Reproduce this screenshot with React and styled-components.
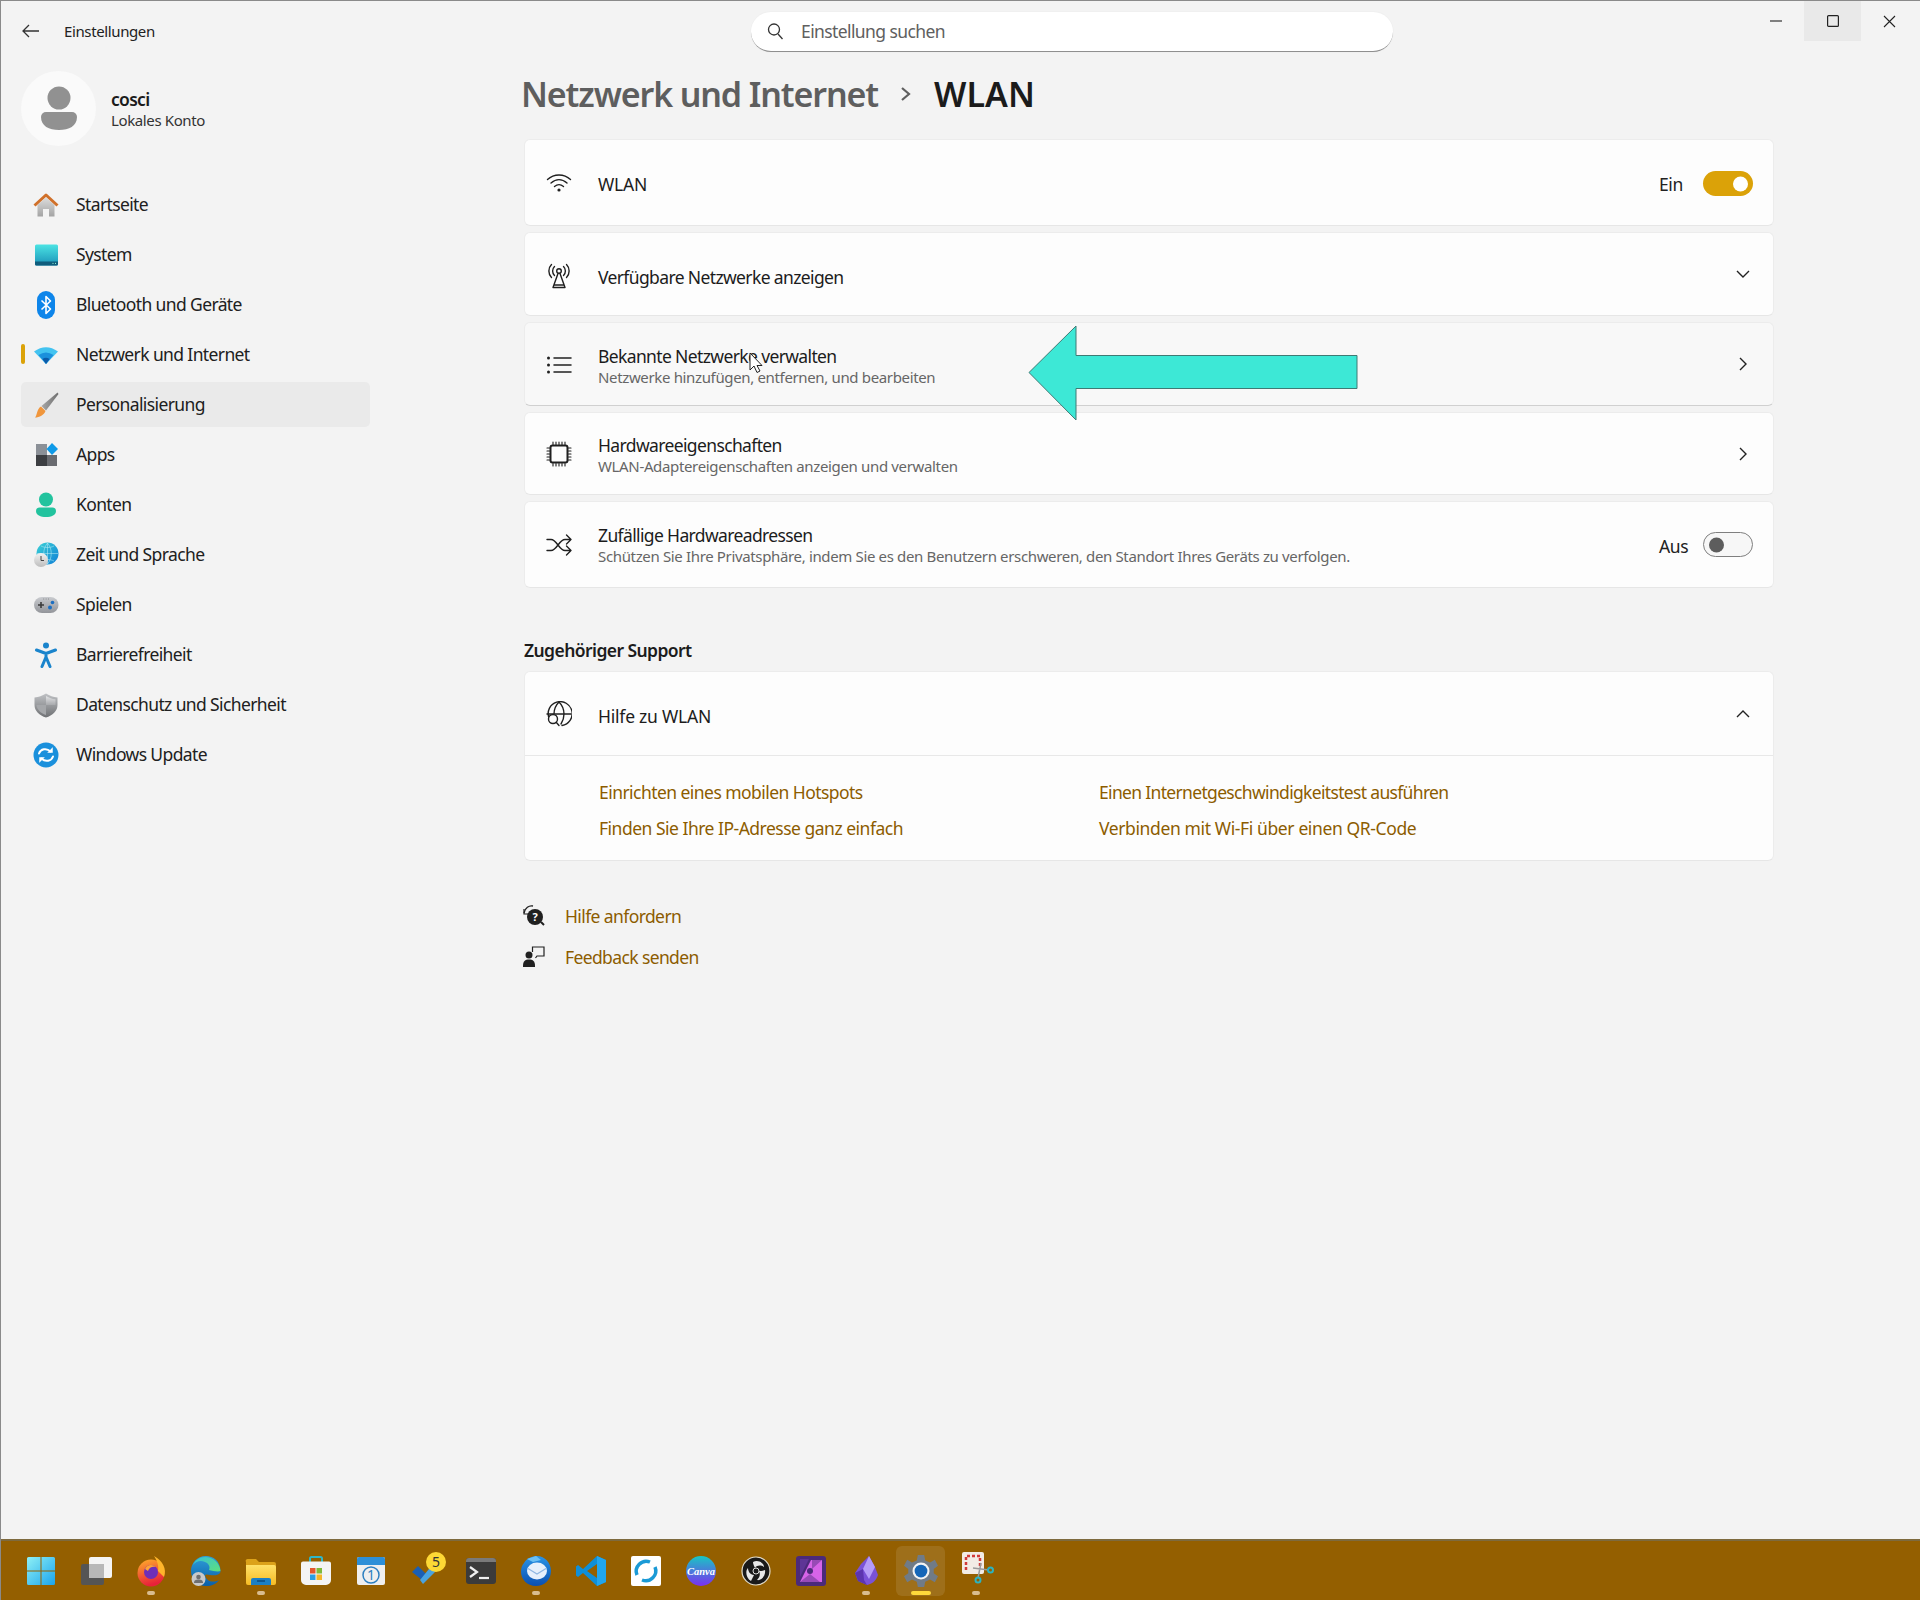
import React from 'react';
import styled, { createGlobalStyle } from 'styled-components';

const Global = createGlobalStyle`
  html, body { margin: 0; padding: 0; background: #f3f3f3; }
  * { box-sizing: border-box; }
  body { font-family: "Noto Sans", "Open Sans", "Liberation Sans", sans-serif; color: #1b1b1b; }
`;

const Page = styled.div`
  width: 1920px; height: 1600px; display: flex; flex-direction: column;
  background: #f3f3f3; border-top: 1px solid #8a8a8a; border-left: 1px solid #8a8a8a; overflow: hidden;
`;
const Win = styled.div`flex: 1; display: flex; flex-direction: column; position: relative; min-height: 0;`;
const Header = styled.header`
  height: 59px; display: grid; grid-template-columns: 750px 642px 1fr; align-items: start;
`;
const HeadLeft = styled.div`display: flex; align-items: center; height: 60px; padding-left: 20px; gap: 24px;`;
const AppName = styled.span`font-size: 15px; color: #222; letter-spacing: -0.38px;`;
const Search = styled.div`
  margin-top: 11px; height: 40px; background: #fff; border-radius: 20px; border-bottom: 1.5px solid #8f8f8f;
  box-shadow: 0 0 0 1px #f0f0f0; display: flex; align-items: center; padding: 0 0 1px 15px; gap: 17px;
  font-size: 17.5px; color: #606060; letter-spacing: -0.6px;
`;
const Controls = styled.div`display: flex; justify-content: flex-end; padding-right: 2px;`;
const Ctl = styled.div`
  width: 57px; height: 40px; display: flex; align-items: center; justify-content: center;
  background: ${p => (p.$hover ? '#e9e9e9' : 'transparent')};
`;
const Body = styled.div`flex: 1; display: flex; min-height: 0;`;
const Side = styled.aside`width: 520px; padding: 11px 0 0 20px;`;
const Profile = styled.div`display: flex; align-items: center; gap: 15px;`;
const Avatar = styled.div`
  width: 75px; height: 75px; border-radius: 50%; background: #fafafa;
  display: flex; align-items: center; justify-content: center;
`;
const Who = styled.div`display: flex; flex-direction: column; margin-top: 1px;`;
const Name = styled.span`font-size: 17.5px; font-weight: 600; line-height: 22px; letter-spacing: -0.7px;`;
const Acct = styled.span`font-size: 15px; line-height: 20px; color: #333; letter-spacing: -0.38px;`;
const Nav = styled.nav`margin-top: 36px; width: 349px; display: flex; flex-direction: column; gap: 5px;`;
const Item = styled.div`
  position: relative; height: 45px; border-radius: 5px; display: flex; align-items: center;
  padding-left: 12px; gap: 17px; font-size: 17.5px; color: #202020; letter-spacing: -0.62px;
  background: ${p => (p.$hover ? '#eaeaea' : 'transparent')};
`;
const NavLabel = styled.span`margin-bottom: 1px;`;
const Marker = styled.span`
  position: absolute; left: 0; top: 12px; width: 4px; height: 20px; border-radius: 2px; background: #dba208;
`;
const Main = styled.main`flex: 1; position: relative; padding-left: 1px;`;
const Crumb = styled.h1`
  margin: 10px 0 0 -1px; height: 48px; display: flex; align-items: center; font-size: 34px; font-weight: 600; line-height: 48px;
`;
const CrumbDim = styled.span`color: #5e5e5e; letter-spacing: -1.12px;`;
const CrumbNow = styled.span`letter-spacing: 0.1px;`;
const CrumbSep = styled.span`width: 56px; display: flex; justify-content: center;`;
const Stack = styled.div`margin: 21px 0 0 2px; width: 1250px; display: flex; flex-direction: column; gap: 6px;`;
const Card = styled.div`
  background: ${p => (p.$hover ? '#f8f8f8' : '#fdfdfd')}; border: 1px solid #ececec;
  border-bottom-color: ${p => (p.$hover ? '#d0d0d0' : '#e6e6e6')}; border-radius: 6px;
`;
const Row = styled.div`
  height: ${p => p.$h}px; display: flex; align-items: center; padding: 0 20px 0 21px;
`;
const RowIcon = styled.div`
  width: 26px; height: 26px; flex: none; display: flex; align-items: center; justify-content: center;
  margin-right: 26px; margin-top: ${p => p.$mt || 0}px;
`;
const RowText = styled.div`flex: 1; display: flex; flex-direction: column; margin-top: ${p => p.$mt || 0}px;`;
const Title = styled.span`font-size: 17.5px; line-height: 22px; color: #1c1c1c; letter-spacing: ${p => (p.$wide ? '-0.22px' : '-0.63px')};`;
const Sub = styled.span`font-size: 15px; line-height: 20px; color: #666; letter-spacing: -0.35px;`;
const State = styled.span`
  font-size: 17.5px; color: #222; width: 44px; flex: none; letter-spacing: -0.4px; margin-top: ${p => p.$mt || 0}px;
`;
const Toggle = styled.div`
  width: 50px; height: 25px; border-radius: 13px; position: relative; margin-top: ${p => p.$mt || 0}px;
  background: ${p => (p.$on ? '#dba208' : '#f7f7f7')}; border: ${p => (p.$on ? 'none' : '1.5px solid #7f7f7f')};
`;
const Knob = styled.span`
  position: absolute; top: 50%; transform: translateY(-50%); width: 15px; height: 15px; border-radius: 50%;
  right: ${p => (p.$on ? '5px' : 'auto')}; left: ${p => (p.$on ? 'auto' : '5px')};
  background: ${p => (p.$on ? '#fff' : '#5d5d5d')};
`;
const Chev = styled.div`width: 22px; display: flex; justify-content: center; margin-right: -1px; margin-top: ${p => p.$mt || 0}px;`;
const SectionHead = styled.h2`margin: 44px 0 3px 0; font-size: 17.5px; font-weight: 600; line-height: 24px; color: #1c1c1c; letter-spacing: -0.57px;`;
const Divider = styled.div`height: 1px; background: #e8e8e8;`;
const LinkGrid = styled.div`
  display: grid; grid-template-columns: 500px 1fr; row-gap: 12px; padding: 24px 0 20px 74px;
`;
const A = styled.a`font-size: 17.5px; line-height: 24px; color: #8c5c00; letter-spacing: ${p => p.$ls}px;`;
const Foot = styled.div`margin-top: 37px; margin-left: -1px; display: flex; flex-direction: column; gap: 17px;`;
const FootRow = styled.div`display: flex; align-items: center; gap: 20px; height: 24px;`;
const Overlay = styled.svg`position: absolute; pointer-events: none; left: ${p => p.$x}px; top: ${p => p.$y}px;`;
const Bar = styled.footer`
  height: 61px; flex: none; background: #945f00; border-top: 2px solid #7e6a3e;
  display: flex; align-items: center; padding-left: 13px; margin-left: -1px;
`;
const Tile = styled.div`
  position: relative; width: 55px; height: 50px; display: flex; align-items: center; justify-content: center; margin-top: 1px;
  &::before {
    content: ''; display: ${p => (p.$active ? 'block' : 'none')}; position: absolute; left: 3px; right: 3px; top: 0; bottom: 0;
    border-radius: 6px; background: rgba(255,255,255,0.1);
  }
  &::after {
    content: ''; display: ${p => (p.$state ? 'block' : 'none')}; position: absolute; bottom: 1px; left: 50%; transform: translateX(-50%);
    width: ${p => (p.$state === 'active' ? '20px' : '8px')}; height: 4px; border-radius: 2px;
    background: ${p => (p.$state === 'active' ? '#ffd83a' : '#d9bd90')};
  }
`;
const TileIcon = styled.svg`position: relative; display: block;`;

const S = ({ size = 26, children, ...r }) => <svg width={size} height={size} viewBox="0 0 26 26" fill="none" {...r}>{children}</svg>;
const Line = ({ children, size = 26 }) => (
  <svg width={size} height={size} viewBox="0 0 26 26" fill="none" stroke="#202020" strokeWidth="1.4" strokeLinecap="round" strokeLinejoin="round">{children}</svg>
);
const G = ({ id, a, b, x2 = 0, y2 = 1 }) => (
  <linearGradient id={id} x1="0" y1="0" x2={x2} y2={y2}><stop offset="0" stopColor={a} /><stop offset="1" stopColor={b} /></linearGradient>
);

const Home = () => <S><defs><G id="h1" a="#dcdcdc" b="#a3a3a3" /></defs>
  <path d="M4.5 13 13 5.5 21.5 13V24.5H16V17H10V24.5H4.5Z" fill="url(#h1)" /><path d="M1.5 13.5 13 3l11.5 10.5" stroke="#d0702a" strokeWidth="3" strokeLinejoin="round" /></S>;
const Sys = () => <S><defs><G id="s1" a="#4be3e3" b="#1a92b8" /></defs>
  <rect x="2" y="2.5" width="23" height="21" rx="1.5" fill="url(#s1)" /><path d="M2 19.5H25V22a1.5 1.5 0 0 1-1.5 1.5h-20A1.5 1.5 0 0 1 2 22Z" fill="#0f5c7c" /><path d="M19.5 21.4h1M22 21.4h1" stroke="#9fd" /></S>;
const Bt = () => <S width={26} height={28} viewBox="1 0 26 28"><rect x="5" y="0" width="18" height="28" rx="9" fill="#0d85ea" /><path d="M9.5 9.5 18.5 18 14 22.5V5.5L18.5 10 9.5 18.5" stroke="#fff" strokeWidth="1.6" strokeLinejoin="round" /></S>;
const Wifi = () => <S><path d="M1 9.5Q13 1 25 9.5L13 22Z" fill="#43c3f0" /><path d="M5.5 13Q13 8 20.5 13L13 22Z" fill="#1b90dc" /><path d="M9.5 17Q13 14.5 16.5 17L13 22Z" fill="#0c5aa8" /></S>;
const Brush = () => <S><defs><G id="b1" a="#a8a8a8" b="#6f6f6f" x2="1" y2="0" /></defs>
  <path d="M24.5 0.5 25.5 2 13 18.5 8.5 14Z" fill="url(#b1)" /><path d="M8 14.5 12.5 19C11 23 6.5 25.5 2 25.5 4.5 23 3.5 17 8 14.5Z" fill="#f0963c" /></S>;
const Apps = () => <S><rect x="3" y="2" width="11" height="11" fill="#8b9097" /><rect x="3" y="13" width="11" height="11" fill="#3c3e42" /><rect x="14" y="13" width="10" height="11" fill="#696b70" /><path d="M19 1 25 7 19 13 13.5 7Z" fill="#0f9ae8" /></S>;
const Acc = () => <S><circle cx="13" cy="7.5" r="7" fill="#22c39e" /><path d="M3 19a3.5 3.5 0 0 1 3.5-3.5h13A3.5 3.5 0 0 1 23 19c0 4-4.5 6-10 6S3 23 3 19Z" fill="#22c39e" /></S>;
const Time = () => <S><defs><G id="t1" a="#3bd2d6" b="#0f7fd6" x2="1" y2="1" /><G id="t2" a="#f2f2f2" b="#bdbdbd" /></defs>
  <circle cx="14.5" cy="11.5" r="11" fill="url(#t1)" /><path d="M14.5 1v21M4 11.5h21M8 4c4 2 9 2 13 0M8 19c4-2 9-2 13 0M14.5 1c-5 6-5 15 0 21M14.5 1c5 6 5 15 0 21" stroke="#bfeef4" strokeWidth=".5" />
  <circle cx="8" cy="18" r="7" fill="url(#t2)" /><path d="M8 14v4.5h3" stroke="#444" strokeWidth="1" /></S>;
const Game = () => <S><defs><G id="g1" a="#c9cbcf" b="#93959a" /></defs><rect x="1" y="5" width="24.5" height="16" rx="8" fill="url(#g1)" /><path d="M5 13h6M8 10v6" stroke="#3c3c3c" strokeWidth="1.6" /><circle cx="17" cy="15.5" r="2" fill="#1d6fc1" /><circle cx="19.5" cy="10.5" r="1.8" fill="#1d6fc1" /><path d="M10.5 7h.6M12.8 7h.6M15 7h.6" stroke="#666" /></S>;
const Access = () => <S><circle cx="13" cy="3.5" r="3" fill="#1a84cc" /><path d="M3.5 8 13 11.5 22.5 8M13 11.5V15.5M13 15 9 24.5M13 15 17 24.5" stroke="#1a84cc" strokeWidth="3" strokeLinecap="round" strokeLinejoin="round" /></S>;
const Shield = () => <S><defs><G id="sh" a="#c0c2c5" b="#6f7174" /><G id="sh2" a="#e2e3e5" b="#a8aaad" /></defs>
  <path d="M13 1.5C17 4 20 5 24.5 5.5V13c0 6-5 10.5-11.5 12.5C6.500 23.500 1.500 19 1.500 13V5.500C6 5 9 4 13 1.500Z" fill="url(#sh)" /><path d="M13 4C16.500 6 19 7 22.500 7.300V13H13Z" fill="url(#sh2)" /><path d="M13 13H3.500C3.800 17.500 7.500 21 13 23Z" fill="#a5a7aa" /></S>;
const Update = () => <S><circle cx="13" cy="13" r="12.500" fill="#1a90dc" /><path d="M6 11.500C7.500 7 13.500 5.500 17.500 9.500M20 14.500C18.500 19 12.500 20.500 8.500 16.500" stroke="#fff" strokeWidth="2" strokeLinecap="round" /><path d="M19.500 5.500V10.500H14.500M6.500 20.500V15.500H11.500" fill="#fff" stroke="#fff" strokeWidth="0.5" /></S>;

const IWifi = () => <Line><path d="M1.500 9.500C8 3.500 18 3.500 24.500 9.500M5 13C10 8.500 16 8.500 21 13M8.500 16.500C11.500 14 14.500 14 17.500 16.500" /><circle cx="13" cy="20" r="1.600" fill="#202020" stroke="none" /></Line>;
const IAnt = () => <Line><circle cx="13" cy="8" r="2.300" /><path d="M8.500 3.500C6 6 6 10 8.500 12.500M17.500 3.500C20 6 20 10 17.500 12.500M5.500 1.500C2 5 2 11 5.500 14.500M20.500 1.500C24 5 24 11 20.500 14.500" /><path d="M12 10.500 7 24.500M14 10.500 19 24.500M8.500 22H17.500M7 24.500H19" /></Line>;
const IList = () => <Line><path d="M8 6H25M8 13H25M8 20H25" strokeWidth="1.500" /><circle cx="2.500" cy="6" r="1.500" fill="#202020" stroke="none" /><circle cx="2.500" cy="13" r="1.500" fill="#202020" stroke="none" /><circle cx="2.500" cy="20" r="1.500" fill="#202020" stroke="none" /></Line>;
const IChip = () => <Line><rect x="4.500" y="4.500" width="17" height="17" rx="2" strokeWidth="2" /><path d="M7 1v2.500M10 1v2.500M13 1v2.500M16 1v2.500M19 1v2.500M7 22.500V25M10 22.500V25M13 22.500V25M16 22.500V25M19 22.500V25M1 7h2.500M1 10h2.500M1 13h2.500M1 16h2.500M1 19h2.500M22.500 7H25M22.500 10H25M22.500 13H25M22.500 16H25M22.500 19H25" strokeWidth="1.100" /></Line>;
const IShuf = () => <Line><path d="M1 7.500H5C11 7.500 13 18.500 19 18.500H25M1 18.500H5C11 18.500 13 7.500 19 7.500H25M20.500 3 25 7.500 20.500 12M20.500 14 25 18.500 20.500 23" /></Line>;
const IGlobe = () => <Line><path d="M3 17A12 12 0 1 1 16 24.500" /><path d="M1 13H25M13 1C9 5 8 9 8 13M13 1C17 5 18 9 18 13C18 17 17 20 15 23" /><circle cx="7" cy="18" r="4.500" fill="#fdfdfd" /><path d="M10.200 21.200 13 24.500" /></Line>;
const IHelp = () => <svg width="22" height="24" viewBox="0 0 22 24"><path d="M1 9C2 4 6 1 10 2" stroke="#202020" strokeWidth="1.300" fill="none" /><path d="M1 5V10H5" stroke="#202020" strokeWidth="1.200" fill="none" /><circle cx="12" cy="13" r="8" fill="#202020" /><path d="M18 18 21 21" stroke="#202020" strokeWidth="2" /><text x="12" y="17" fontSize="11" fontWeight="700" fill="#fff" textAnchor="middle" fontFamily="Noto Sans">?</text></svg>;
const IFeed = () => <svg width="22" height="24" viewBox="0 0 22 24"><circle cx="6" cy="10" r="3.500" fill="#202020" /><path d="M0 21C0 16 2 14.500 6 14.500S12 16 12 21V22H0Z" fill="#202020" /><path d="M9.500 7V2H21V11H14L12.500 13" stroke="#202020" strokeWidth="1.200" fill="none" /></svg>;
const ChevR = () => <svg width="12" height="18" viewBox="0 0 12 18" fill="none" stroke="#222" strokeWidth="1.400"><path d="M3 3 9 9 3 15" /></svg>;
const ChevD = () => <svg width="16" height="12" viewBox="0 0 16 12" fill="none" stroke="#222" strokeWidth="1.400"><path d="M2 3 8 9 14 3" /></svg>;
const ChevU = () => <svg width="16" height="12" viewBox="0 0 16 12" fill="none" stroke="#222" strokeWidth="1.400"><path d="M2 9 8 3 14 9" /></svg>;

const T = ({ children, w = 32 }) => <TileIcon width={w} height={w} viewBox="0 0 32 32">{children}</TileIcon>;

const TWin = () => <T><defs><G id="w1" a="#8ff0f4" b="#1aa4ee" x2="1" y2="1" /></defs><path d="M2 3.500A1.500 1.500 0 0 1 3.500 2H15.500V15.500H2ZM16.500 2H28.500A1.500 1.500 0 0 1 30 3.500V15.500H16.500ZM2 16.500H15.500V30H3.500A1.500 1.500 0 0 1 2 28.500ZM16.500 16.500H30V28.500A1.500 1.500 0 0 1 28.500 30H16.500Z" fill="url(#w1)" /></T>;
const TView = () => <T><rect x="9" y="2" width="23" height="21" rx="2" fill="#f4f4f4" /><rect x="1" y="9" width="23" height="21" rx="2" fill="#555" /><rect x="9" y="9" width="15" height="14" fill="#b8b8b8" /></T>;
const TFox = () => <T><defs><G id="f1" a="#ffb02a" b="#e8203a" x2="0.300" /></defs><circle cx="16" cy="18" r="13.500" fill="url(#f1)" /><path d="M19 1C28 6 32 14 29 22L23 16C24 10 22 6 19 1Z" fill="#ffb52b" /><circle cx="16" cy="17" r="7" fill="#6e2fb8" /><path d="M10 14C12 9 18 9 21 12 18 11 14 12 13 16Z" fill="#ffa436" /></T>;
const TEdge = () => <T><defs><G id="e1" a="#2f9ed8" b="#0a5fa8" /><G id="e2" a="#35c1d8" b="#5fe07a" x2="1" y2="1" /></defs><path d="M30.500 16C30.500 6 23 1 16 1 7 1 1 8 1 16C1 25 8 31 16 31C22 31 26 29 29 25C24 28 16 27 15 20C17 18 22 22 28 19.500C30 18.500 30.500 17.500 30.500 16Z" fill="url(#e1)" /><path d="M30.500 16C30 8 23 2 15 2 10 2 5 5 3 10 6 6 11 5 15 7 20 9 20 13 19 15 23 16 28 17 30.500 16Z" fill="url(#e2)" /><circle cx="8.500" cy="24" r="7" fill="#c9c9c9" /><circle cx="8.500" cy="22" r="2.300" fill="#6f6f6f" /><path d="M4 28C4 25 6 24.500 8.500 24.500S13 25 13 28Z" fill="#6f6f6f" /></T>;
const TDir = () => <T><defs><G id="d1" a="#ffe169" b="#f6bb23" /></defs><path d="M1 7A2 2 0 0 1 3 4H11L14 7H29A2 2 0 0 1 31 9V13H1Z" fill="#dca21a" /><path d="M1 10H29A2 2 0 0 1 31 12V28A2 2 0 0 1 29 30H3A2 2 0 0 1 1 28Z" fill="url(#d1)" /><path d="M6 30V25A2 2 0 0 1 8 23H24A2 2 0 0 1 26 25V30Z" fill="#1b7fc4" /><path d="M12 26H20" stroke="#0b4a80" strokeWidth="1.500" /></T>;
const TStore = () => <T><path d="M10 8V3.500A1.500 1.500 0 0 1 11.500 2H20.500A1.500 1.500 0 0 1 22 3.500V8" stroke="#2fb6c7" strokeWidth="2" fill="none" /><path d="M1 8.500A2 2 0 0 1 3 6.500H29A2 2 0 0 1 31 8.500V25A5 5 0 0 1 26 30H6A5 5 0 0 1 1 25Z" fill="#f4f4f4" /><rect x="10" y="13" width="5.500" height="5.500" fill="#e4572e" /><rect x="16.500" y="13" width="5.500" height="5.500" fill="#7fba3a" /><rect x="10" y="19.500" width="5.500" height="5.500" fill="#2a9de4" /><rect x="16.500" y="19.500" width="5.500" height="5.500" fill="#f4b528" /></T>;
const TCal = () => <T><rect x="2" y="2" width="28" height="28" rx="2" fill="#efefef" /><path d="M2 4A2 2 0 0 1 4 2H28A2 2 0 0 1 30 4V10H2Z" fill="#2d8fd8" /><circle cx="16" cy="20" r="8" stroke="#2d7fc0" strokeWidth="1.500" fill="none" /><text x="16" y="25" fontSize="14" fill="#2d7fc0" textAnchor="middle" fontFamily="Noto Sans">1</text></T>;
const TCheck = () => <TileIcon width="38" height="36" viewBox="0 0 38 36" style={{ marginLeft: 8, marginTop: -2 }}><path d="M1 20 7 14 15 22 11 28Z" fill="#1a5fb4" /><path d="M9 28 12 32 27 17 22 12Z" fill="#4aa3df" /><circle cx="25" cy="10" r="10" fill="#fdd835" /><text x="25" y="15" fontSize="14" fill="#333" textAnchor="middle" fontFamily="Noto Sans">5</text></TileIcon>;
const TTerm = () => <T><rect x="1" y="3" width="30" height="26" rx="3" fill="#3b3b3b" /><path d="M1 6A3 3 0 0 1 4 3H28A3 3 0 0 1 31 6V7H1Z" fill="#7a7a7a" /><path d="M5 12 12 17 5 22" stroke="#f0f0f0" strokeWidth="2.200" fill="none" /><path d="M14 23H24" stroke="#f0f0f0" strokeWidth="2.200" /></T>;
const TBird = () => <T><defs><G id="tb" a="#2a94e6" b="#0a4fb0" /></defs><path d="M4 8C7 3 12 1 17 1 25 1 31 8 31 16 31 25 24 31 16 31 7 31 1 24 1 17 1 13 2 10 4 8Z" fill="url(#tb)" /><path d="M7 4 16 1 21 5 13 7Z" fill="#6cc0f4" /><ellipse cx="17" cy="16" rx="10" ry="8.500" fill="#e6f0fc" /><path d="M8 13.500 17 19 26 13.500" stroke="#8fb6e2" strokeWidth="1.200" fill="none" /></T>;
const TCode = () => <T><path d="M22 1 31 5V27L22 31 8 18 3 22 1 20.500V11.500L3 10 8 14Z" fill="#0f8fd8" /><path d="M22 1 31 5V27L22 31Z" fill="#22a6ee" /><path d="M22 9 12 16 22 23Z" fill="#945f00" /></T>;
const TRing = () => <T><rect x="1" y="1" width="30" height="30" rx="2" fill="#fff" /><path d="M7 20A10 10 0 0 1 20 7" stroke="#1a9ad6" strokeWidth="3.500" fill="none" /><path d="M25 12A10 10 0 0 1 12 25" stroke="#1a9ad6" strokeWidth="3.500" fill="none" /></T>;
const TCanva = () => <T><defs><G id="ca" a="#18c7c4" b="#7b2ff0" /></defs><circle cx="16" cy="16" r="15" fill="url(#ca)" /><text x="16" y="20" fontSize="10.500" fontStyle="italic" fontWeight="700" fill="#fff" textAnchor="middle" fontFamily="Liberation Serif">Canva</text></T>;
const TObs = () => <T><circle cx="16" cy="16" r="14" fill="#1a1a1a" stroke="#e4ddcb" strokeWidth="1.200" /><circle cx="16" cy="16" r="3" fill="#1a1a1a" stroke="#ddd" /><path d="M13 7C18 4 24 8 24 12 21 10 17 10 15 13 14 11 13 9 13 7ZM25 15C26 21 21 26 17 25 19 23 21 20 19 16 21 16 23 16 25 15ZM11 26C6 23 5 16 8 13 8 16 10 20 14 20 13 22 12 24 11 26Z" fill="#e8e8e8" /></T>;
const TAff = () => <T><rect x="1" y="1" width="30" height="30" rx="3" fill="#4b2a7a" /><path d="M5 27 16 5H27V27Z" fill="#d664e8" /><path d="M17 5 27 5 17 14ZM5 27 15 19 25 27Z" fill="#4b2a7a" opacity=".45" /><circle cx="15" cy="16" r="3" fill="#4b2a7a" /><path d="M14 4 5 22V4Z" fill="#5e3596" /></T>;
const TObsid = () => <T><path d="M19 1 25 12 28 20C26 26 22 29 17 30L8 26 5 18 11 9Z" fill="#7a52d8" /><path d="M19 1 13 14 19 24 25 12Z" fill="#b59cf8" /><path d="M5 18 13 14 14 25 17 30 8 26Z" fill="#5c35b0" /></T>;
const TGear = () => <T w={34}><path d="M13 1H19L20 6 24.500 8 29 5.500 32 11 28 14V18L32 21 29 26.500 24.500 24 20 26 19 31H13L12 26 7.500 24 3 26.500 0 21 4 18V14L0 11 3 5.500 7.500 8 12 6Z" fill="#707b87" /><circle cx="16" cy="16" r="8" fill="#f2f2f2" /><circle cx="16" cy="16" r="6" fill="#1566b8" /></T>;
const TSnip = () => <TileIcon width="32" height="36" viewBox="0 0 32 36" style={{ marginLeft: 4, marginTop: -2 }}><rect x="0" y="0" width="22" height="22" rx="2" fill="#f2ece6" /><path d="M4 18V4H18V16" stroke="#d13a3a" strokeWidth="2.500" strokeDasharray="3 2" fill="none" /><path d="M19 11 16 26M11 16 27 18" stroke="#9a9a9a" strokeWidth="1.500" /><circle cx="16" cy="28" r="2.500" stroke="#2bb3c0" strokeWidth="2" fill="none" /><circle cx="28.500" cy="18" r="2.500" stroke="#2bb3c0" strokeWidth="2" fill="none" /></TileIcon>;

const nav = [
  ['Startseite', Home], ['System', Sys], ['Bluetooth und Geräte', Bt], ['Netzwerk und Internet', Wifi, 'mark'],
  ['Personalisierung', Brush, 'hover'], ['Apps', Apps], ['Konten', Acc], ['Zeit und Sprache', Time], ['Spielen', Game],
  ['Barrierefreiheit', Access], ['Datenschutz und Sicherheit', Shield], ['Windows Update', Update],
];
const bar = [
  [TWin], [TView], [TFox, 'open'], [TEdge], [TDir, 'open'], [TStore], [TCal], [TCheck], [TTerm],
  [TBird, 'open'], [TCode], [TRing], [TCanva], [TObs], [TAff], [TObsid, 'open'], [TGear, 'active'], [TSnip, 'open'],
];

export default function App() {
  return (
    <Page>
      <Global />
      <Win>
        <Header>
          <HeadLeft>
            <svg width="19" height="16" viewBox="0 0 19 16" fill="none" stroke="#333" strokeWidth="1.300"><path d="M18 8H2M8 2 2 8 8 14" /></svg>
            <AppName>Einstellungen</AppName>
          </HeadLeft>
          <Search>
            <svg width="18" height="18" viewBox="0 0 18 18" fill="none" stroke="#333" strokeWidth="1.300"><circle cx="8" cy="7.500" r="5.500" /><path d="M12 12 16.500 17" /></svg>
            Einstellung suchen
          </Search>
          <Controls>
            <Ctl><svg width="12" height="2"><path d="M0 1H12" stroke="#333" strokeWidth="1.200" /></svg></Ctl>
            <Ctl $hover><svg width="12" height="12"><rect x=".6" y=".6" width="10.800" height="10.800" rx="1" fill="none" stroke="#222" strokeWidth="1.200" /></svg></Ctl>
            <Ctl><svg width="13" height="13"><path d="M1 1 12 12M12 1 1 12" stroke="#222" strokeWidth="1.100" /></svg></Ctl>
          </Controls>
        </Header>
        <Body>
          <Side>
            <Profile>
              <Avatar>
                <svg width="36" height="45" viewBox="0 0 36 45"><circle cx="18" cy="12" r="11.500" fill="#919191" /><path d="M0 31a5 5 0 0 1 5-5h26a5 5 0 0 1 5 5c0 9-8 13-18 13S0 40 0 31Z" fill="#919191" /></svg>
              </Avatar>
              <Who><Name>cosci</Name><Acct>Lokales Konto</Acct></Who>
            </Profile>
            <Nav>
              {nav.map(([label, Icon, f]) => (
                <Item key={label} $hover={f === 'hover'}>
                  {f === 'mark' && <Marker />}
                  <Icon />
                  <NavLabel>{label}</NavLabel>
                </Item>
              ))}
            </Nav>
          </Side>
          <Main>
            <Crumb>
              <CrumbDim>Netzwerk und Internet</CrumbDim>
              <CrumbSep><svg width="14" height="20" viewBox="0 0 14 20" fill="none" stroke="#5e5e5e" strokeWidth="2.200"><path d="M3 4 10 10 3 16" /></svg></CrumbSep>
              <CrumbNow>WLAN</CrumbNow>
            </Crumb>
            <Stack>
              <Card>
                <Row $h={85}><RowIcon><IWifi /></RowIcon><RowText $mt={2}><Title $wide>WLAN</Title></RowText><State $mt={3}>Ein</State><Toggle $on $mt={2}><Knob $on /></Toggle></Row>
              </Card>
              <Card>
                <Row $h={82}><RowIcon $mt={3}><IAnt /></RowIcon><RowText $mt={5}><Title>Verfügbare Netzwerke anzeigen</Title></RowText><Chev><ChevD /></Chev></Row>
              </Card>
              <Card $hover>
                <Row $h={82}><RowIcon $mt={2}><IList /></RowIcon><RowText $mt={3}><Title>Bekannte Netzwerke verwalten</Title><Sub>Netzwerke hinzufügen, entfernen, und bearbeiten</Sub></RowText><Chev><ChevR /></Chev></Row>
              </Card>
              <Card>
                <Row $h={81}><RowIcon $mt={1}><IChip /></RowIcon><RowText $mt={3}><Title>Hardwareeigenschaften</Title><Sub>WLAN-Adaptereigenschaften anzeigen und verwalten</Sub></RowText><Chev><ChevR /></Chev></Row>
              </Card>
              <Card>
                <Row $h={85}><RowIcon><IShuf /></RowIcon><RowText $mt={1}><Title>Zufällige Hardwareadressen</Title><Sub>Schützen Sie Ihre Privatsphäre, indem Sie es den Benutzern erschweren, den Standort Ihres Geräts zu verfolgen.</Sub></RowText><State $mt={3}>Aus</State><Toggle><Knob /></Toggle></Row>
              </Card>
              <SectionHead>Zugehöriger Support</SectionHead>
              <Card>
                <Row $h={83}><RowIcon $mt={1}><IGlobe /></RowIcon><RowText $mt={5}><Title $wide>Hilfe zu WLAN</Title></RowText><Chev $mt={1}><ChevU /></Chev></Row>
                <Divider />
                <LinkGrid>
                  <A $ls={-0.55}>Einrichten eines mobilen Hotspots</A><A $ls={-0.67}>Einen Internetgeschwindigkeitstest ausführen</A>
                  <A $ls={-0.5}>Finden Sie Ihre IP-Adresse ganz einfach</A><A $ls={-0.38}>Verbinden mit Wi-Fi über einen QR-Code</A>
                </LinkGrid>
              </Card>
              <Foot>
                <FootRow><IHelp /><A $ls={-0.6}>Hilfe anfordern</A></FootRow>
                <FootRow><IFeed /><A $ls={-0.62}>Feedback senden</A></FootRow>
              </Foot>
            </Stack>
            <Overlay $x={507} $y={265} width="330" height="97" viewBox="0 0 330 97">
              <path d="M1 47.500 48 1V30.500H329V63.500H48V95Z" fill="#3de8d6" stroke="#3f7a74" strokeWidth="1" />
            </Overlay>
            <Overlay $x={228} $y={292} width="16" height="22" viewBox="0 0 16 22">
              <path d="M1 1V18L5 14 8 20.500 11 19 8 13.500H13Z" fill="#fff" stroke="#222" strokeWidth="1" />
            </Overlay>
          </Main>
        </Body>
      </Win>
      <Bar>
        {bar.map(([Icon, st], i) => (
          <Tile key={i} $state={st} $active={st === 'active'}><Icon /></Tile>
        ))}
      </Bar>
    </Page>
  );
}
